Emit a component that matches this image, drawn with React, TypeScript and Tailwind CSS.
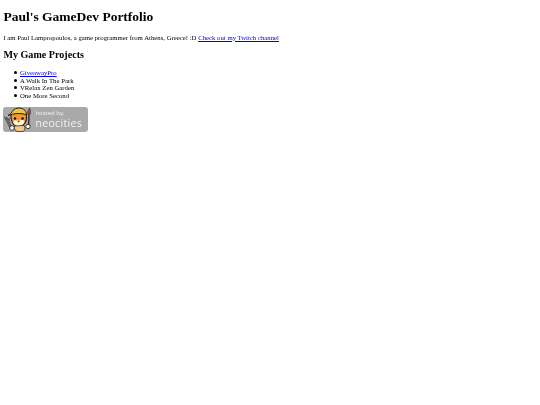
const serif = { fontFamily: '"Liberation Serif", serif' };

function Tanuki() {
  return (
    <svg width="32" height="25" viewBox="0 0 32 25" className="absolute left-0 top-0">
      <path d="M25.5 22 L26 6" stroke="#3a3028" strokeWidth="1.5" />
      <path d="M24.4 7 C24.6 4 25.6 2 26.6 0.8 C27.4 2.5 27.8 5 27.4 7 Z" fill="#a8453c" stroke="#3a3028" strokeWidth="0.5" />
      <path d="M1.5 9.5 L2.5 12.5 L4 10 L5 13 L6.2 11 L6.5 14.5 L9 21 L7 21.5 L4 15 Z" fill="#6d6d6d" stroke="#333" strokeWidth="0.5" />
      <path d="M8 8 C8 5 12 3 16 3 C20 3 23.5 6 23.5 10 C24 15 20.5 19.5 15.5 19.5 C10.5 19.5 7.5 14 8 8 Z" fill="#ef9a34" stroke="#1e1e1e" strokeWidth="1.1" />
      <path d="M5 8.5 C8 7 9 5 10 3.5 C12.5 0.5 19 0 22 3.5 C23 5 23.5 6.5 23.5 8 C18 5.5 11 6.5 5 8.5 Z" fill="#f0c53c" stroke="#1e1e1e" strokeWidth="1" />
      <path d="M10 15 C11 12.5 13 13 15.5 14 C18 12.8 20.5 12.5 21.5 14.5 C20.5 18 18 19 15.5 19 C13 19 11 17.5 10 15 Z" fill="#fbf0dc" />
      <circle cx="12" cy="11.5" r="1.25" fill="#111" />
      <circle cx="19.5" cy="11.5" r="1.25" fill="#111" />
      <path d="M14.5 14.2 L16.8 14.2 L15.6 15.6 Z" fill="#111" />
      <path d="M11 19 C11 22 12.5 24.5 15 24.5 L20 24.5 C22 24 22.5 21 21 18.5 Z" fill="#f3c98a" stroke="#1e1e1e" strokeWidth="0.7" />
      <circle cx="9" cy="21" r="2.3" fill="#fdf8ee" stroke="#1e1e1e" strokeWidth="0.8" />
      <circle cx="25" cy="19.5" r="2.2" fill="#fdf8ee" stroke="#1e1e1e" strokeWidth="0.8" />
    </svg>
  );
}

function Item({ children }: { children: React.ReactNode }) {
  return (
    <li className="flex items-center gap-[3.4px]">
      <span className="w-[3px] h-[3px] shrink-0 rounded-full bg-black" />
      <span>{children}</span>
    </li>
  );
}

export default function App() {
  return (
    <div className="px-[3.4px] text-black bg-white min-h-[405px] blur-[0.2px]" style={serif}>
      <h1 className="text-[13.5px] font-bold leading-[15.5px] pt-[9px] mb-[9px]">Paul's GameDev Portfolio</h1>
      <p className="text-[6.75px] leading-[8px] mb-[7.5px]">
        I am Paul Lampropoulos, a game programmer from Athens, Greece! :D{" "}
        <a className="text-[#0000ee] underline">Check out my Twitch channel</a>
      </p>
      <h2 className="text-[10.1px] font-bold leading-[11.5px] mb-[8.5px]">My Game Projects</h2>
      <ul className="pl-[10.2px] text-[6.75px] leading-[7.6px] mb-[7.5px]">
        <Item><a className="text-[#0000ee] underline">GiveawayPro</a></Item>
        <Item>A Walk In The Park</Item>
        <Item>VRelax Zen Garden</Item>
        <Item>One More Second</Item>
      </ul>
      <div className="relative w-[84.5px] h-[25px] rounded-[3px] bg-[#a9a9a9]">
        <Tanuki />
        <div className="flex flex-col pl-[32px] pt-[3.5px] text-[#f2f2f2]" style={{ fontFamily: '"Open Sans", sans-serif' }}>
          <span className="text-[6px] leading-[6.5px]">hosted by,</span>
          <span className="text-[10.5px] leading-[12px] tracking-[0.35px]">neocities</span>
        </div>
      </div>
    </div>
  );
}
